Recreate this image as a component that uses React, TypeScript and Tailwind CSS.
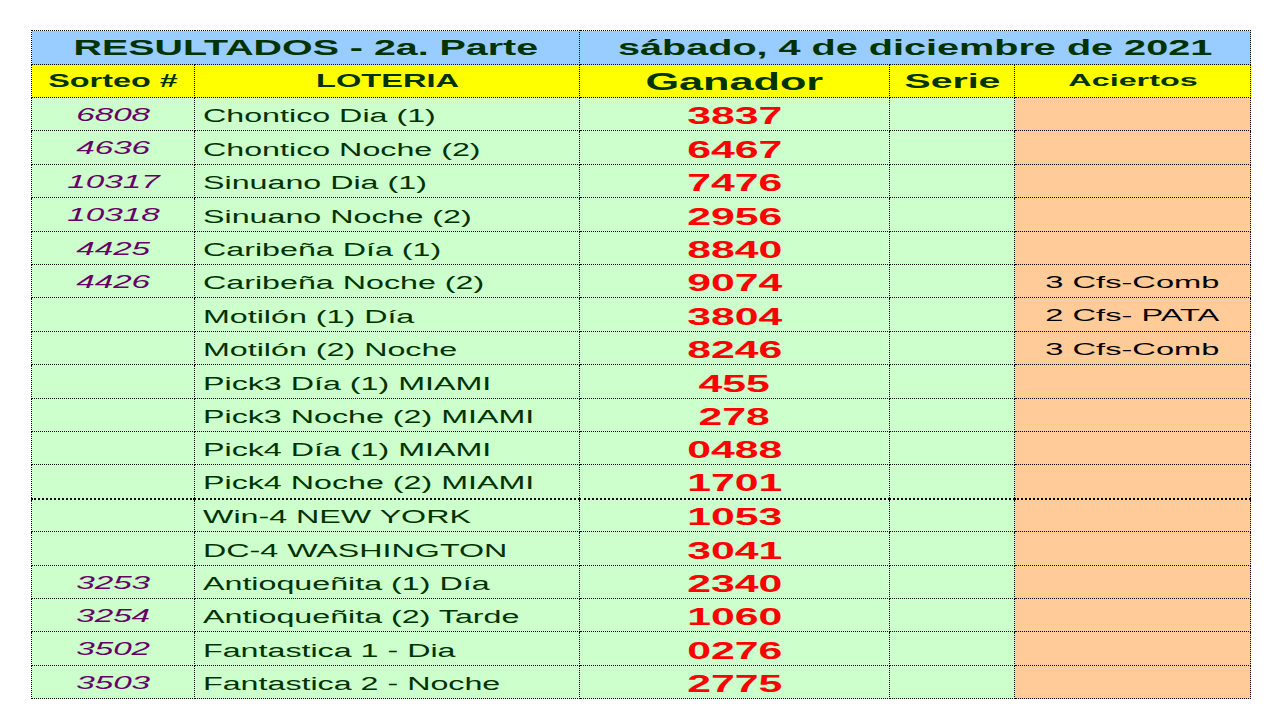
import React from "react";

type Row = {
  sorteo: string;
  loteria: string;
  ganador: string;
  aciertos: string;
  tall?: boolean;
  thick?: boolean;
};

const rows: Row[] = [
  { sorteo: "6808", loteria: "Chontico Dia (1)", ganador: "3837", aciertos: "" },
  { sorteo: "4636", loteria: "Chontico Noche (2)", ganador: "6467", aciertos: "", tall: true },
  { sorteo: "10317", loteria: "Sinuano Dia (1)", ganador: "7476", aciertos: "" },
  { sorteo: "10318", loteria: "Sinuano Noche (2)", ganador: "2956", aciertos: "", tall: true },
  { sorteo: "4425", loteria: "Caribeña Día (1)", ganador: "8840", aciertos: "" },
  { sorteo: "4426", loteria: "Caribeña Noche (2)", ganador: "9074", aciertos: "3 Cfs-Comb" },
  { sorteo: "", loteria: "Motilón (1) Día", ganador: "3804", aciertos: "2 Cfs- PATA", tall: true },
  { sorteo: "", loteria: "Motilón (2) Noche", ganador: "8246", aciertos: "3 Cfs-Comb" },
  { sorteo: "", loteria: "Pick3 Día (1) MIAMI", ganador: "455", aciertos: "", tall: true },
  { sorteo: "", loteria: "Pick3 Noche (2) MIAMI", ganador: "278", aciertos: "" },
  { sorteo: "", loteria: "Pick4 Día (1) MIAMI", ganador: "0488", aciertos: "" },
  { sorteo: "", loteria: "Pick4 Noche (2) MIAMI", ganador: "1701", aciertos: "", tall: true, thick: true },
  { sorteo: "", loteria: "Win-4 NEW YORK", ganador: "1053", aciertos: "" },
  { sorteo: "", loteria: "DC-4 WASHINGTON", ganador: "3041", aciertos: "", tall: true },
  { sorteo: "3253", loteria: "Antioqueñita (1) Día", ganador: "2340", aciertos: "" },
  { sorteo: "3254", loteria: "Antioqueñita (2) Tarde", ganador: "1060", aciertos: "" },
  { sorteo: "3502", loteria: "Fantastica 1 - Dia", ganador: "0276", aciertos: "", tall: true },
  { sorteo: "3503", loteria: "Fantastica 2 - Noche", ganador: "2775", aciertos: "" },
];

const cell = "border border-dotted border-black p-0";

export default function App() {
  return (
    <div className="min-h-[720px] bg-white pt-[30px] pl-[31px] font-['Liberation_Sans',Arial,sans-serif] text-[#003300]">
      <table className="w-[1219px] table-fixed border-collapse leading-none">
        <colgroup>
          <col className="w-[163px]" />
          <col className="w-[385px]" />
          <col className="w-[310px]" />
          <col className="w-[125px]" />
          <col className="w-[236px]" />
        </colgroup>
        <thead>
          <tr className="bg-[#99ccff]">
            <td colSpan={2} className={`${cell} h-[34px] text-center`}>
              <span className="inline-block scale-x-[1.79] text-[22px] font-bold">RESULTADOS - 2a. Parte</span>
            </td>
            <td colSpan={3} className={`${cell} h-[34px] text-center`}>
              <span className="inline-block scale-x-[1.8] text-[22px] font-bold">sábado, 4 de diciembre de 2021</span>
            </td>
          </tr>
          <tr className="bg-[#ffff00]">
            <td className={`${cell} h-[33px] text-center`}>
              <span className="inline-block scale-x-[1.8] text-[18px] font-bold">Sorteo #</span>
            </td>
            <td className={`${cell} h-[33px] text-center`}>
              <span className="inline-block scale-x-[1.81] text-[18px] font-bold">LOTERIA</span>
            </td>
            <td className={`${cell} h-[33px] text-center`}>
              <span className="inline-block translate-y-[1px] scale-x-[1.88] text-[23px] font-bold">Ganador</span>
            </td>
            <td className={`${cell} h-[33px] text-center`}>
              <span className="inline-block scale-x-[1.96] text-[20px] font-bold">Serie</span>
            </td>
            <td className={`${cell} h-[33px] text-center`}>
              <span className="inline-block scale-x-[2.02] text-[16px] font-bold">Aciertos</span>
            </td>
          </tr>
        </thead>
        <tbody>
          {rows.map((r, i) => (
            <tr key={i} className={`bg-[#ccffcc] ${r.thick ? "border-b-2 border-dotted border-black" : ""}`}>
              <td className={`${cell} ${r.tall ? "h-[34px]" : "h-[33px]"} text-center`}>
                <span className="inline-block scale-x-[1.75] text-[19px] italic text-[#660066]">{r.sorteo}</span>
              </td>
              <td className={`${cell} pl-[8px] text-left`}>
                <span className="inline-block origin-left translate-y-[2px] scale-x-[1.79] text-[18px]">{r.loteria}</span>
              </td>
              <td className={`${cell} text-center`}>
                <span className="inline-block translate-y-[2px] scale-x-[1.78] text-[24px] font-bold text-[#ff0000]">{r.ganador}</span>
              </td>
              <td className={cell}></td>
              <td className={`${cell} bg-[#ffcc99] text-center`}>
                <span className="inline-block translate-y-[1px] scale-x-[1.92] text-[17px] text-black">{r.aciertos}</span>
              </td>
            </tr>
          ))}
        </tbody>
      </table>
    </div>
  );
}
